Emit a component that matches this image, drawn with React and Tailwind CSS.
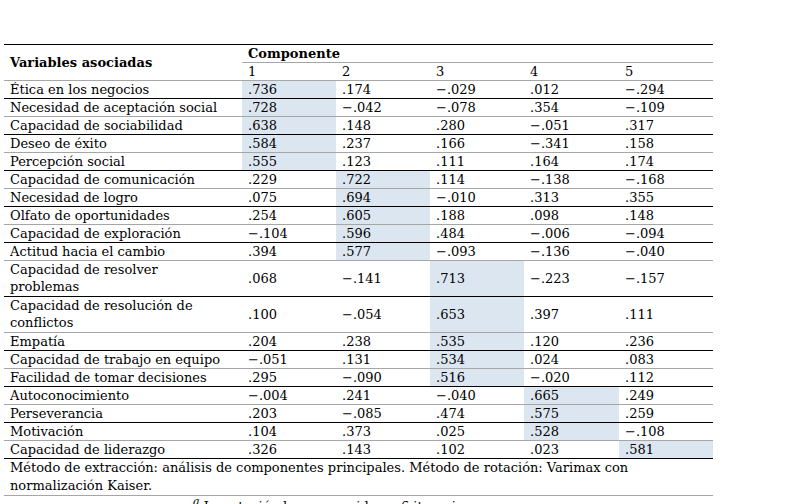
import React from "react";

const rows = [
  { label: ["Ética en los negocios"], v: [".736", ".174", "−.029", ".012", "−.294"], h: 0, line: "black" },
  { label: ["Necesidad de aceptación social"], v: [".728", "−.042", "−.078", ".354", "−.109"], h: 0, line: "gray" },
  { label: ["Capacidad de sociabilidad"], v: [".638", ".148", ".280", "−.051", ".317"], h: 0, line: "black" },
  { label: ["Deseo de éxito"], v: [".584", ".237", ".166", "−.341", ".158"], h: 0, line: "gray" },
  { label: ["Percepción social"], v: [".555", ".123", ".111", ".164", ".174"], h: 0, line: "black" },
  { label: ["Capacidad de comunicación"], v: [".229", ".722", ".114", "−.138", "−.168"], h: 1, line: "gray" },
  { label: ["Necesidad de logro"], v: [".075", ".694", "−.010", ".313", ".355"], h: 1, line: "black" },
  { label: ["Olfato de oportunidades"], v: [".254", ".605", ".188", ".098", ".148"], h: 1, line: "gray" },
  { label: ["Capacidad de exploración"], v: ["−.104", ".596", ".484", "−.006", "−.094"], h: 1, line: "black" },
  { label: ["Actitud hacia el cambio"], v: [".394", ".577", "−.093", "−.136", "−.040"], h: 1, line: "gray" },
  { label: ["Capacidad de resolver", "problemas"], v: [".068", "−.141", ".713", "−.223", "−.157"], h: 2, line: "black" },
  { label: ["Capacidad de resolución de", "conflictos"], v: [".100", "−.054", ".653", ".397", ".111"], h: 2, line: "gray" },
  { label: ["Empatía"], v: [".204", ".238", ".535", ".120", ".236"], h: 2, line: "black" },
  { label: ["Capacidad de trabajo en equipo"], v: ["−.051", ".131", ".534", ".024", ".083"], h: 2, line: "gray" },
  { label: ["Facilidad de tomar decisiones"], v: [".295", "−.090", ".516", "−.020", ".112"], h: 2, line: "black" },
  { label: ["Autoconocimiento"], v: ["−.004", ".241", "−.040", ".665", ".249"], h: 3, line: "gray" },
  { label: ["Perseverancia"], v: [".203", "−.085", ".474", ".575", ".259"], h: 3, line: "black" },
  { label: ["Motivación"], v: [".104", ".373", ".025", ".528", "−.108"], h: 3, line: "gray" },
  { label: ["Capacidad de liderazgo"], v: [".326", ".143", ".102", ".023", ".581"], h: 4, line: "black" },
];

export default function App() {
  return (
    <div
      className="w-[795px] h-[504px] overflow-hidden bg-white text-black pt-[44px] pl-[4px]"
      style={{ fontFamily: '"DejaVu Serif", serif' }}
    >
      <table className="border-collapse text-[13px] leading-[17px] w-[709px] table-fixed">
        <colgroup>
          <col className="w-[238px]" />
          <col className="w-[94px]" />
          <col className="w-[94px]" />
          <col className="w-[94px]" />
          <col className="w-[95px]" />
          <col className="w-[94px]" />
        </colgroup>
        <thead>
          <tr className="h-[18px] border-t border-black">
            <th rowSpan={2} className="text-left font-bold pl-[6px] align-middle border-b border-[#a6a6a6]">
              Variables asociadas
            </th>
            <th colSpan={5} className="text-left font-bold pl-[6px] border-b border-[#a6a6a6]">
              Componente
            </th>
          </tr>
          <tr className="h-[18px] border-b border-[#a6a6a6]">
            {["1", "2", "3", "4", "5"].map((n) => (
              <th key={n} className="text-left font-normal pl-[6px]">
                {n}
              </th>
            ))}
          </tr>
        </thead>
        <tbody>
          {rows.map((r) => (
            <tr
              key={r.label[0]}
              className={`${r.label.length > 1 ? "h-[35.8px]" : "h-[17.9px]"} border-b ${
                r.line === "black" ? "border-black" : "border-[#a6a6a6]"
              }`}
            >
              <td className="pl-[6px] pr-[4px] align-middle whitespace-nowrap">
                {r.label.map((l, i) => (
                  <div key={i}>{l}</div>
                ))}
              </td>
              {r.v.map((x, i) => (
                <td
                  key={i}
                  className={`pl-[6px] align-middle ${i === r.h ? "bg-[#dce6f1]" : ""}`}
                >
                  {x}
                </td>
              ))}
            </tr>
          ))}
          <tr className="border-b border-[#a6a6a6]">
            <td colSpan={6} className="pl-[6px] leading-[18px] whitespace-nowrap">
              Método de extracción: análisis de componentes principales. Método de rotación: Varimax con
              <br />
              normalización Kaiser.
            </td>
          </tr>
        </tbody>
      </table>
      <div className="pl-[189px] pt-[3px] text-[13px] leading-[16px]">
        <sup className="italic text-[11px]">a</sup> La rotación ha convergido en 6 iteraciones.
      </div>
    </div>
  );
}
